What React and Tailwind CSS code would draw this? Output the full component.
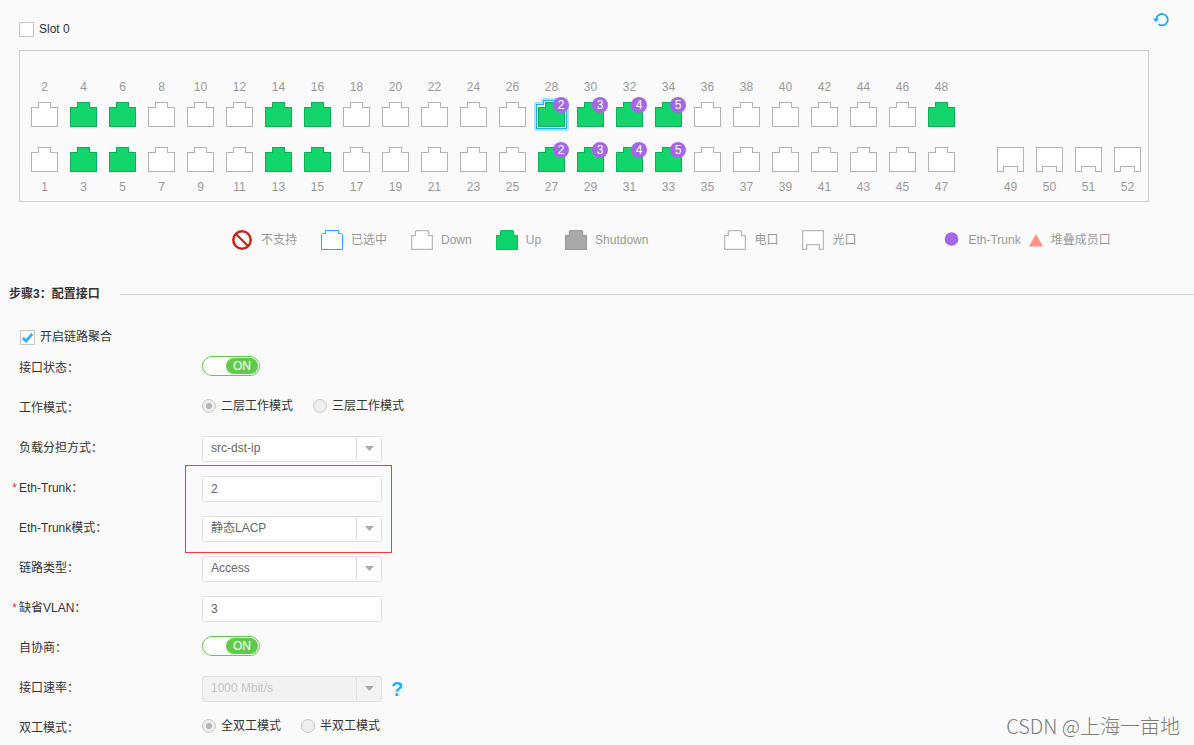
import React, { useState } from "react";

const UP_PORTS = new Set([3, 4, 5, 6, 13, 14, 15, 16, 27, 28, 29, 30, 31, 32, 33, 34, 48]);
const TRUNKS = { 27: 2, 28: 2, 29: 3, 30: 3, 31: 4, 32: 4, 33: 5, 34: 5 };
const COPPER = "M.5 24.5V5.5H7.5V.5H19.5V5.5H26.5V24.5Z";
const FIBER = "M.5 .5H26.5V24.5H20.5V19.5H6.5V24.5H.5Z";
const OUTLINE = "M-1.5 26.5V2.5H5.5V-1.5H21.5V2.5H28.5V26.5Z";

function Port({ number, fiber, selected, onSelect }) {
  const up = UP_PORTS.has(number);
  const trunk = TRUNKS[number];
  return (
    <button
      type="button"
      aria-label={`Port ${number}`}
      aria-pressed={selected}
      onClick={onSelect}
      className="relative block h-[25px] w-[27px]"
    >
      <svg width="27" height="25" viewBox="0 0 27 25" className="block overflow-visible">
        {selected && (
          <>
            <path d={OUTLINE} fill="#fff" stroke="#b7def3" strokeWidth="5" strokeLinejoin="round" />
            <path d={OUTLINE} fill="#fff" stroke="#1fadf5" shapeRendering="crispEdges" />
          </>
        )}
        <path
          d={fiber ? FIBER : COPPER}
          fill={up ? "#12d56b" : "#fff"}
          stroke={up ? "#0eaf58" : "#b3b3b3"}
          shapeRendering="crispEdges"
        />
      </svg>
      {trunk && (
        <span className="absolute -top-[5px] left-[15px] flex h-4 w-4 items-center justify-center rounded-full bg-[#a368e6] text-xs leading-4 text-white">
          {trunk}
        </span>
      )}
    </button>
  );
}

function PortColumn({ top, bottom, fiber, selected, onSelect }) {
  return (
    <div className="flex w-[39px] flex-col items-center leading-5 text-[#999]">
      <span className="h-5">{top}</span>
      <div className="mt-[5px] h-[25px]">
        {top && <Port number={top} selected={selected === top} onSelect={() => onSelect(top)} />}
      </div>
      <div className="mt-5 h-[25px]">
        <Port number={bottom} fiber={fiber} selected={selected === bottom} onSelect={() => onSelect(bottom)} />
      </div>
      <span className="mt-[5px] h-5">{bottom}</span>
    </div>
  );
}

function PortIcon({ fill = "#fff", stroke = "#b9b9b9", fiber }) {
  return (
    <svg width="22" height="20" viewBox="0 0 22 20" className="shrink-0">
      <path
        d={
          fiber
            ? "M.6 .6H21.4V19.4H17.400V14.600H4.600V19.4H.6Z"
            : "M.6 19.4V5.600H4.400V1.600L5.400 .6H16.600L17.600 1.600V5.600H21.400V19.4Z"
        }
        fill={fill}
        stroke={stroke}
        strokeWidth="1.300"
      />
    </svg>
  );
}

function LegendItem({ icon, children, className = "" }) {
  return (
    <div className={`flex shrink-0 items-center gap-2 ${className}`}>
      {icon}
      <span className="whitespace-nowrap">{children}</span>
    </div>
  );
}

function Toggle({ id }) {
  const [on, setOn] = useState(true);
  return (
    <button
      id={id}
      type="button"
      role="switch"
      aria-checked={on}
      onClick={() => setOn(!on)}
      className={`flex h-5 w-[58px] items-center rounded-full border border-[#5ecb4b] bg-white px-px ${on ? "justify-end" : "justify-start"}`}
    >
      <span className="flex h-4 w-8 items-center justify-center rounded-full bg-[#5ecb4b] text-xs leading-4 text-white">
        {on ? "ON" : "OFF"}
      </span>
    </button>
  );
}

function RadioGroup({ name, options }) {
  return (
    <div role="radiogroup" aria-labelledby={`${name}-label`} className="flex h-5 items-center gap-5">
      {options.map((option, i) => (
        <label key={option} className="flex items-center gap-[5px]">
          <input
            type="radio"
            name={name}
            defaultChecked={i === 0}
            className="flex h-[14px] w-[14px] appearance-none items-center justify-center rounded-full border border-[#c8c8c8] bg-[#eee] before:h-[6px] before:w-[6px] before:rounded-full checked:before:bg-[#b5b5b5]"
          />
          <span className="leading-5">{option}</span>
        </label>
      ))}
    </div>
  );
}

function Select({ id, value, disabled }) {
  return (
    <div className="relative w-[180px]">
      <select
        id={id}
        disabled={disabled}
        className="block h-[26px] w-full appearance-none rounded-[3px] border border-[#dfdfdf] bg-white pr-7 pb-[2px] pl-2 text-xs text-[#666] disabled:bg-[#f2f2f2] disabled:text-[#c6c6c6] disabled:opacity-100"
      >
        <option>{value}</option>
      </select>
      <span className="pointer-events-none absolute top-px right-px bottom-[2px] flex w-[25px] items-center justify-center border-l border-[#dfdfdf]">
        <svg width="9" height="5" viewBox="0 0 9 5">
          <path d="M0 0H9L4.500 5Z" fill="#aaa" />
        </svg>
      </span>
    </div>
  );
}

function TextBox({ id, value }) {
  return (
    <input
      id={id}
      type="text"
      defaultValue={value}
      className="block h-[26px] w-[180px] rounded-[3px] border border-[#dfdfdf] bg-white px-2 text-xs text-[#666]"
    />
  );
}

function Row({ id, label, required, group, children }) {
  const Tag = group ? "span" : "label";
  return (
    <div className="flex h-6 items-start">
      <span className="w-[19px] shrink-0 pr-[2px] text-right leading-6 text-[#e0303f]">{required ? "*" : ""}</span>
      <Tag id={`${id}-label`} htmlFor={group ? undefined : id} className="w-[183px] shrink-0 leading-6">
        {label}：
      </Tag>
      {children}
    </div>
  );
}

function CheckBox({ checked, label, className = "" }) {
  return (
    <label className={`flex items-center gap-[5px] ${className}`}>
      <span className="relative block h-[15px] w-[15px]">
        <input
          type="checkbox"
          defaultChecked={checked}
          className="peer block h-[15px] w-[15px] appearance-none border border-[#c6c6c6] bg-white"
        />
        <svg
          width="15"
          height="15"
          viewBox="0 0 15 15"
          className="pointer-events-none absolute inset-0 hidden peer-checked:block"
        >
          <path d="M2.800 8L6 11L12.300 3.800" fill="none" stroke="#2bb3f7" strokeWidth="2.800" />
        </svg>
      </span>
      <span className="leading-5">{label}</span>
    </label>
  );
}

export default function App() {
  const [selected, setSelected] = useState(28);
  const columns = Array.from({ length: 24 }, (_, i) => i * 2 + 1);

  return (
    <main
      lang="zh-CN"
      className="relative min-h-screen overflow-x-hidden bg-[#fafafa] font-['Liberation_Sans','Noto_Sans_CJK_SC',sans-serif] text-xs text-[#333]"
    >
      <header className="flex h-[50px] items-start justify-between pr-[25px] pl-[19px]">
        <CheckBox label="Slot 0" className="mt-[19px]" />
        <button type="button" aria-label="刷新" className="mt-3">
          <svg width="16" height="15" viewBox="0 0 16 15" className="block">
            <path d="M3.300 8A5.700 5.700 0 1 1 5.600 12.300" fill="none" stroke="#1ba9f5" strokeWidth="1.800" />
            <path d="M0 6.500H6L3 10.200Z" fill="#1ba9f5" />
          </svg>
        </button>
      </header>

      <section className="mr-[45px] ml-[19px] flex border border-[#cfcfcf] pt-[26px] pb-1 pl-[5px]">
        {columns.map((n) => (
          <PortColumn key={n} top={n + 1} bottom={n} selected={selected} onSelect={setSelected} />
        ))}
        <div className="ml-[30px] flex">
          {[49, 50, 51, 52].map((n) => (
            <PortColumn key={n} bottom={n} fiber selected={selected} onSelect={setSelected} />
          ))}
        </div>
      </section>

      <div className="mt-7 flex h-5 items-center gap-6 pl-[232px] leading-5 text-[#999]">
        <LegendItem
          icon={
            <svg width="20" height="20" viewBox="0 0 20 20" className="mr-px">
              <circle cx="10" cy="10" r="8.700" fill="#fff" stroke="#c4261d" strokeWidth="2.500" />
              <path d="M4 4L16 16" stroke="#c4261d" strokeWidth="2.200" />
            </svg>
          }
        >
          不支持
        </LegendItem>
        <LegendItem
          icon={
            <svg width="22" height="20" viewBox="0 0 22 20" className="shrink-0">
              <path d="M.5 19.500V4.500L1.500 3.500H4.500V.5H17.500V3.500H20.500L21.500 4.500V19.500Z" fill="#fff" stroke="#1fadf5" />
            </svg>
          }
        >
          已选中
        </LegendItem>
        <LegendItem icon={<PortIcon />}>Down</LegendItem>
        <LegendItem icon={<PortIcon fill="#0cd66b" stroke="#0bc45f" />}>Up</LegendItem>
        <LegendItem icon={<PortIcon fill="#a9abaa" stroke="#999b9a" />}>Shutdown</LegendItem>
        <LegendItem className="ml-[52px]" icon={<PortIcon />}>
          电口
        </LegendItem>
        <LegendItem icon={<PortIcon fiber />}>光口</LegendItem>
        <LegendItem
          className="ml-16"
          icon={
            <svg width="16" height="16" viewBox="0 0 16 16">
              <circle cx="7.500" cy="7" r="6.800" fill="#a368e6" />
            </svg>
          }
        >
          Eth-Trunk
        </LegendItem>
        <LegendItem
          className="-ml-4"
          icon={
            <svg width="14" height="13" viewBox="0 0 14 13">
              <path d="M7 0L14 12.500H0Z" fill="#ff9086" />
            </svg>
          }
        >
          堆叠成员口
        </LegendItem>
      </div>

      <div className="mt-[34px] flex h-5 items-center gap-5 pl-[9px]">
        <h2 className="font-bold leading-5">步骤3：配置接口</h2>
        <div className="h-px flex-1 bg-[#d2d2d2]" />
      </div>

      <form className="pb-1">
        <CheckBox checked label="开启链路聚合" className="mt-[22px] ml-5 h-[22px]" />
        <div className="mt-2 flex flex-col gap-4">
          <Row id="state" label="接口状态">
            <Toggle id="state" />
          </Row>
          <Row id="mode" label="工作模式" group>
            <RadioGroup name="mode" options={["二层工作模式", "三层工作模式"]} />
          </Row>
          <Row id="balance" label="负载分担方式">
            <Select id="balance" value="src-dst-ip" />
          </Row>
          <div className="relative flex flex-col gap-4">
            <Row id="trunk" label="Eth-Trunk" required>
              <TextBox id="trunk" value="2" />
            </Row>
            <Row id="trunk-mode" label="Eth-Trunk模式">
              <Select id="trunk-mode" value="静态LACP" />
            </Row>
            <div className="pointer-events-none absolute -top-[11px] -bottom-[13px] left-[185px] w-[207px] border border-[#f0403c]" />
          </div>
          <Row id="link" label="链路类型">
            <Select id="link" value="Access" />
          </Row>
          <Row id="vlan" label="缺省VLAN" required>
            <TextBox id="vlan" value="3" />
          </Row>
          <Row id="auto" label="自协商">
            <Toggle id="auto" />
          </Row>
          <Row id="rate" label="接口速率">
            <Select id="rate" value="1000 Mbit/s" disabled />
            <button type="button" className="ml-[9px] h-[26px] text-xl leading-[26px] font-bold text-[#1fb0fa]">
              ?
            </button>
          </Row>
          <Row id="duplex" label="双工模式" group>
            <RadioGroup name="duplex" options={["全双工模式", "半双工模式"]} />
          </Row>
        </div>
      </form>

      <div className="absolute right-[14px] bottom-[5px] font-['Noto_Sans_CJK_SC',sans-serif] text-xl font-light text-[#7c7c7c]">
        CSDN @上海一亩地
      </div>
    </main>
  );
}
